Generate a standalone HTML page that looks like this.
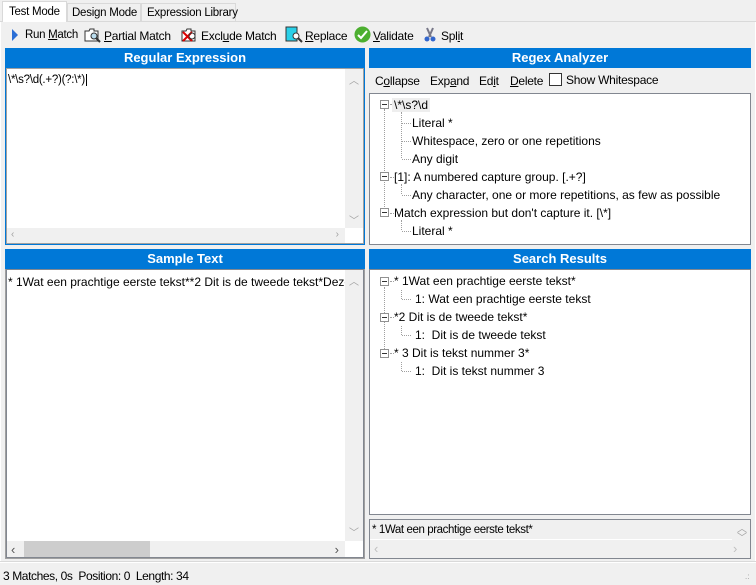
<!DOCTYPE html>
<html><head><meta charset="utf-8"><style>
*{margin:0;padding:0;box-sizing:border-box}
body{width:756px;height:585px;background:#f0f0f0;font-family:"Liberation Sans",sans-serif;font-size:12px;color:#000;position:relative;overflow:hidden}
.a{position:absolute;white-space:nowrap}
.t{font-size:12px;letter-spacing:-0.25px}
.hdr{position:absolute;background:#0078d7;color:#fff;font-weight:bold;font-size:13px;text-align:center;line-height:20px}
.box{position:absolute;background:#fff;border:1px solid #828790}
.sb{position:absolute;background:#f0f0f0;color:#a0a0a0;font-size:10px}
u{text-decoration:underline}
.exp{position:absolute;width:9px;height:9px;border:1px solid #919191;background:#fff}
.exp:after{content:"";position:absolute;left:1px;top:3px;width:5px;height:1px;background:#333}
.vl{position:absolute;border-left:1px dotted #a0a0a0}
.hl{position:absolute;border-top:1px dotted #a0a0a0;height:0}
</style></head><body>
<!-- tabs -->
<div class="a" style="left:0;top:21px;width:756px;height:1px;background:#d9d9d9"></div>
<div class="a t" style="left:2px;top:1px;width:65px;height:21px;background:#fff;border:1px solid #d9d9d9;border-bottom:none;padding:4px 0 0 6px;font-size:11.5px">Test Mode</div>
<div class="a t" style="left:67px;top:3px;width:74px;height:18px;background:#f0f0f0;border:1px solid #d9d9d9;border-bottom:none;padding:3px 0 0 4px;font-size:11.5px">Design Mode</div>
<div class="a t" style="left:141px;top:3px;width:95px;height:18px;background:#f0f0f0;border:1px solid #d9d9d9;border-bottom:none;padding:3px 0 0 5px;font-size:11.5px">Expression Library</div>
<div class="a" style="left:0;top:22px;width:756px;height:541px;background:#fff"></div>
<div class="a" style="left:1px;top:22px;width:754px;height:540px;background:#f0f0f0"></div>
<!-- toolbar -->
<svg class="a" style="left:10px;top:28px" width="10" height="14"><path d="M2 1 L8 7 L2 13Z" fill="#2b6fd6"/></svg>
<div class="a t" style="left:25px;top:29px;font-size:11.5px;letter-spacing:-0.3px">Run <u>M</u>atch</div>
<svg class="a" style="left:84px;top:27px" width="18" height="16"><path d="M1 4h4l1-2h4v2h4v10H1Z" fill="#fff" stroke="#333"/><circle cx="10" cy="9" r="3" fill="#bde" stroke="#333"/><path d="M12 11l4 4" stroke="#333" stroke-width="2"/></svg>
<div class="a t" style="left:104px;top:29px"><u>P</u>artial Match</div>
<svg class="a" style="left:181px;top:27px" width="18" height="16"><path d="M1 4h4l1-2h4v2h4v10H1Z" fill="#fff" stroke="#333"/><path d="M2 5l9 9M11 5l-9 9" stroke="#d00" stroke-width="2"/><circle cx="11" cy="9" r="3" fill="none" stroke="#333"/></svg>
<div class="a t" style="left:201px;top:29px">Excl<u>u</u>de Match</div>
<svg class="a" style="left:285px;top:26px" width="18" height="17"><rect x="1" y="1" width="11" height="14" fill="#29d0e8" stroke="#333"/><circle cx="11" cy="10" r="3" fill="#fff" stroke="#333"/><path d="M13 12l4 4" stroke="#333" stroke-width="2"/></svg>
<div class="a t" style="left:305px;top:29px"><u>R</u>eplace</div>
<svg class="a" style="left:354px;top:26px" width="17" height="17"><circle cx="8.5" cy="8.5" r="8" fill="#4caf30"/><path d="M4 9l3 3 6-7" stroke="#fff" stroke-width="2" fill="none"/></svg>
<div class="a t" style="left:373px;top:29px"><u>V</u>alidate</div>
<svg class="a" style="left:424px;top:27px" width="12" height="16"><path d="M3 1l4 9M9 1l-4 9" stroke="#778" stroke-width="2"/><circle cx="3" cy="12" r="2.5" fill="#36c"/><circle cx="9" cy="12" r="2.5" fill="#36c"/></svg>
<div class="a t" style="left:441px;top:29px">Spl<u>i</u>t</div>

<!-- Regular Expression panel -->
<div class="a" style="left:5px;top:48px;width:360px;height:197px;border:1px solid #0078d7;background:#f0f0f0"></div>
<div class="hdr" style="left:5px;top:48px;width:360px;height:20px">Regular Expression</div>
<div class="box" style="left:6px;top:68px;width:358px;height:176px;border-color:#a0a0a0"></div>
<div class="a t" style="left:8px;top:74px;font-size:11.5px">\*\s?\d(.+?)(?:\*)<span style="border-left:1px solid #000;margin-left:1px"></span></div>
<div class="sb" style="left:345px;top:69px;width:18px;height:159px"><span class="a" style="left:4px;top:3px">︿</span><span class="a" style="left:4px;top:143px">﹀</span></div>
<div class="sb" style="left:7px;top:228px;width:338px;height:15px"><span class="a" style="left:4px;top:1px">‹</span><span class="a" style="right:6px;top:1px">›</span></div>

<!-- Regex Analyzer -->
<div class="hdr" style="left:369px;top:48px;width:382px;height:20px">Regex Analyzer</div>
<div class="a t" style="left:375px;top:74px">C<u>o</u>llapse</div>
<div class="a t" style="left:430px;top:74px">Exp<u>a</u>nd</div>
<div class="a t" style="left:479px;top:74px">Ed<u>i</u>t</div>
<div class="a t" style="left:510px;top:74px"><u>D</u>elete</div>
<div class="a" style="left:549px;top:73px;width:13px;height:13px;border:1px solid #333;background:#fff"></div>
<div class="a t" style="left:566px;top:73px">Show Whitespace</div>
<div class="box" style="left:369px;top:93px;width:382px;height:152px"></div>
<div class="vl" style="left:384px;top:109px;height:108px"></div>
<div class="vl" style="left:401px;top:112px;height:46px"></div>
<div class="vl" style="left:401px;top:184px;height:10px"></div>
<div class="vl" style="left:401px;top:220px;height:10px"></div>
<div class="exp" style="left:380px;top:100px"></div>
<div class="hl" style="left:390px;top:104px;width:4px"></div>
<div class="a" style="left:392px;top:98px;background:#eee;padding:0 2px">\*\s?\d</div>
<div class="hl" style="left:402px;top:123px;width:9px"></div><div class="a" style="left:412px;top:116px">Literal *</div>
<div class="hl" style="left:402px;top:141px;width:9px"></div><div class="a" style="left:412px;top:134px">Whitespace, zero or one repetitions</div>
<div class="hl" style="left:402px;top:159px;width:9px"></div><div class="a" style="left:412px;top:152px">Any digit</div>
<div class="exp" style="left:380px;top:172px"></div><div class="hl" style="left:390px;top:177px;width:4px"></div>
<div class="a" style="left:394px;top:170px">[1]: A numbered capture group. [.+?]</div>
<div class="hl" style="left:402px;top:195px;width:9px"></div><div class="a" style="left:412px;top:188px">Any character, one or more repetitions, as few as possible</div>
<div class="exp" style="left:380px;top:208px"></div><div class="hl" style="left:390px;top:213px;width:4px"></div>
<div class="a" style="left:394px;top:206px">Match expression but don't capture it. [\*]</div>
<div class="hl" style="left:402px;top:231px;width:9px"></div><div class="a" style="left:412px;top:224px">Literal *</div>

<!-- Sample Text -->
<div class="a" style="left:5px;top:249px;width:360px;height:310px;border:1px solid #a0a0a0;background:#f0f0f0"></div>
<div class="hdr" style="left:5px;top:249px;width:360px;height:20px">Sample Text</div>
<div class="box" style="left:6px;top:269px;width:358px;height:289px;border-color:#828790"></div>
<div class="a" style="left:8px;top:275px;width:338px;overflow:hidden">* 1Wat een prachtige eerste tekst**2 Dit is de tweede tekst*Deze</div>
<div class="sb" style="left:345px;top:270px;width:18px;height:271px"><span class="a" style="left:4px;top:3px">︿</span><span class="a" style="left:4px;top:254px">﹀</span></div>
<div class="sb" style="left:7px;top:541px;width:338px;height:16px;color:#555"><span class="a" style="left:4px;top:1px;font-size:13px">‹</span><div class="a" style="left:17px;top:0;width:126px;height:16px;background:#cdcdcd"></div><span class="a" style="right:6px;top:1px;font-size:13px">›</span></div>

<!-- Search Results -->
<div class="hdr" style="left:369px;top:249px;width:382px;height:20px">Search Results</div>
<div class="box" style="left:369px;top:269px;width:382px;height:246px"></div>
<div class="vl" style="left:384px;top:287px;height:66px"></div>
<div class="vl" style="left:401px;top:290px;height:9px"></div>
<div class="vl" style="left:401px;top:326px;height:9px"></div>
<div class="vl" style="left:401px;top:362px;height:9px"></div>
<div class="exp" style="left:380px;top:277px"></div><div class="hl" style="left:390px;top:281px;width:4px"></div>
<div class="a" style="left:394px;top:274px">* 1Wat een prachtige eerste tekst*</div>
<div class="hl" style="left:402px;top:299px;width:9px"></div><div class="a" style="left:415px;top:292px">1: Wat een prachtige eerste tekst</div>
<div class="exp" style="left:380px;top:313px"></div><div class="hl" style="left:390px;top:317px;width:4px"></div>
<div class="a" style="left:394px;top:310px">*2 Dit is de tweede tekst*</div>
<div class="hl" style="left:402px;top:335px;width:9px"></div><div class="a" style="left:415px;top:328px">1:&nbsp; Dit is de tweede tekst</div>
<div class="exp" style="left:380px;top:349px"></div><div class="hl" style="left:390px;top:353px;width:4px"></div>
<div class="a" style="left:394px;top:346px">* 3 Dit is tekst nummer 3*</div>
<div class="hl" style="left:402px;top:371px;width:9px"></div><div class="a" style="left:415px;top:364px">1:&nbsp; Dit is tekst nummer 3</div>

<div class="a" style="left:369px;top:519px;width:382px;height:40px;border:1px solid #828790;background:#f0f0f0"></div>
<div class="a" style="left:370px;top:520px;width:362px;height:20px;background:#f0f0f0;border-bottom:1px solid #fff"></div>
<div class="a t" style="left:372px;top:524px;font-size:11.5px;letter-spacing:-0.4px">* 1Wat een prachtige eerste tekst*</div>
<div class="sb" style="left:733px;top:520px;width:17px;height:22px"><span class="a" style="left:4px;top:0">︿</span><span class="a" style="left:4px;top:9px">﹀</span></div>
<div class="a" style="left:374px;top:541px;color:#c0c0c0;font-size:13px">‹</div>
<div class="a" style="left:733px;top:541px;color:#c0c0c0;font-size:13px">›</div>

<!-- status -->
<div class="a" style="left:0;top:561px;width:756px;height:1px;background:#d9d9d9"></div>
<div class="a" style="left:3px;top:569px;font-size:12px;letter-spacing:-0.4px">3 Matches, 0s&nbsp; Position: 0&nbsp; Length: 34</div>
<div class="a" style="left:745px;top:572px;color:#999;font-size:8px">.:</div>
</body></html>
